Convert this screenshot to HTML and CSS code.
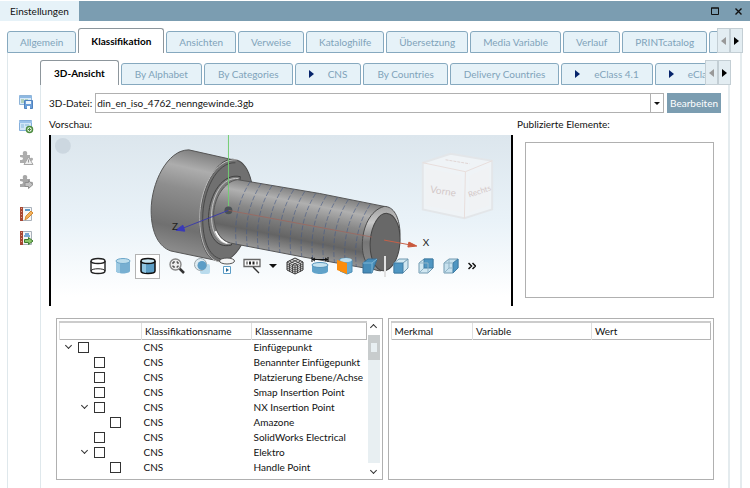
FILE: index.html
```html
<!DOCTYPE html>
<html lang="de">
<head>
  <meta charset="UTF-8">
  <meta name="viewport" content="width=device-width, initial-scale=1.0">
  <title>Einstellungen</title>
  <link rel="stylesheet" href="styles.css">
</head>
<body>

<header class="titlebar">
  <h1>Einstellungen</h1>
  <div class="window-buttons">
    <button type="button" aria-label="Maximieren"><svg width="8" height="8" viewBox="0 0 8 8"><path d="M.5 1h7v6.500h-7z M0 1h8" fill="none" stroke="#111"/></svg></button>
    <button type="button" aria-label="Schließen"><svg width="7" height="7" viewBox="0 0 7 7"><path d="M.5.5l6 6M6.500.5l-6 6" stroke="#111" stroke-width="1.400"/></svg></button>
  </div>
</header>

<div class="tabbar main-tabs">
  <nav class="tabs" aria-label="Bereiche">
    <button type="button" class="tab">Allgemein</button>
    <button type="button" class="tab active">Klassifikation</button>
    <button type="button" class="tab">Ansichten</button>
    <button type="button" class="tab">Verweise</button>
    <button type="button" class="tab">Kataloghilfe</button>
    <button type="button" class="tab">Übersetzung</button>
    <button type="button" class="tab">Media Variable</button>
    <button type="button" class="tab">Verlauf</button>
    <button type="button" class="tab">PRINTcatalog</button>
    <button type="button" class="tab" aria-label="Weitere"></button>
  </nav>
  <div class="tab-scroll">
    <button type="button" aria-label="Zurück" disabled><span class="tri left"></span></button>
    <button type="button" aria-label="Weiter"><span class="tri"></span></button>
  </div>
</div>

<main class="page">
  <aside class="sidebar">
    <button type="button" aria-label="Speichern">
      <svg width="16" height="16" viewBox="0 0 16 16"><path d="M1.500 1.500h12v9h-12z" fill="#d7e9f8" stroke="#8fb4d8"/><path d="M1 2h13v2H1z" fill="#8db8e2"/><path d="M3 6h3M3 8h3M7 6h3" stroke="#8cb884"/><path d="M6.500 6.500h8v8h-8z" fill="#6c9fd8" stroke="#4f82bf"/><path d="M8 7h5v3H8z" fill="#eef5fc"/><path d="M9 12h3v3H9z" fill="#fff"/></svg>
    </button>
    <button type="button" aria-label="Neu">
      <svg width="16" height="16" viewBox="0 0 16 16"><path d="M1.500 2.500h12v10h-12z" fill="#d3e7f8" stroke="#85aedb"/><path d="M1 3h13v2H1z" fill="#9cc3ea"/><path d="M3 7h3M3 9h3M7 7h4" stroke="#89b9da"/><circle cx="11.500" cy="11.500" r="3" fill="#e6f3e0" stroke="#4c8b3f" stroke-width="1.500"/><path d="M10 11.500h3M11.500 10v3" stroke="#4c8b3f"/></svg>
    </button>
    <button type="button" class="spaced" aria-label="Warnung" disabled>
      <svg width="16" height="16" viewBox="0 0 16 16"><path d="M2 5h3q-1-4 2-4t2 4h3v3q3-1 3 1t-3 2v2H2v-3q3 0 3-1.500T2 7z" fill="#adadad"/><path d="M10.500 7l4.500 7.500H6z" fill="#eee" stroke="#a5a5a5"/><path d="M10.500 9.500v3" stroke="#999"/></svg>
    </button>
    <button type="button" aria-label="Exportieren" disabled>
      <svg width="16" height="16" viewBox="0 0 16 16"><path d="M2 5h3q-1-4 2-4t2 4h3v3q3-1 3 1t-3 2v2H2v-3q3 0 3-1.500T2 7z" fill="#a7a7a7"/><path d="M7 8.500h3.500V6.500l4.500 4-4.500 4v-2H7z" fill="#c2c2c2" stroke="#8f8f8f"/></svg>
    </button>
    <button type="button" class="spaced" aria-label="Bearbeiten">
      <svg width="16" height="16" viewBox="0 0 16 16"><path d="M4.500 1.500h9v13h-9z" fill="#f7f7f7" stroke="#a9b1ba"/><path d="M2 1h3v14H2z" fill="#a64633"/><path d="M3.500 2v12" stroke="#e0a089" stroke-dasharray="1 2"/><path d="M7 4h5" stroke="#5f9bc8" stroke-width="2"/><path d="M7 14l1-4 5-5 2 2-5 5z" fill="#f4b25a" stroke="#d18a35"/></svg>
    </button>
    <button type="button" aria-label="Hinzufügen">
      <svg width="16" height="16" viewBox="0 0 16 16"><path d="M4.500 1.500h9v13h-9z" fill="#f7f7f7" stroke="#a9b1ba"/><path d="M2 1h3v14H2z" fill="#a64633"/><path d="M3.500 2v12" stroke="#e0a089" stroke-dasharray="1 2"/><path d="M6 6h6M7 4h4" stroke="#4e8fc6" stroke-width="1.500"/><path d="M6.500 9.500h4v-2l4.500 3.500-4.500 3.500v-2h-4z" fill="#8cc56b" stroke="#3d7c2f"/></svg>
    </button>
  </aside>

  <section class="content">
    <div class="tabbar sub-tabs">
      <nav class="tabs" aria-label="Klassifikationen">
        <button type="button" class="tab active">3D-Ansicht</button>
        <button type="button" class="tab">By Alphabet</button>
        <button type="button" class="tab">By Categories</button>
        <button type="button" class="tab"><span class="tri"></span>CNS</button>
        <button type="button" class="tab">By Countries</button>
        <button type="button" class="tab">Delivery Countries</button>
        <button type="button" class="tab"><span class="tri"></span>eClass 4.1</button>
        <button type="button" class="tab"><span class="tri"></span>eClass 5.0</button>
      </nav>
      <div class="tab-scroll">
        <button type="button" aria-label="Zurück" disabled><span class="tri left"></span></button>
        <button type="button" aria-label="Weiter"><span class="tri"></span></button>
      </div>
    </div>

    <div class="panel">
      <div class="file-row">
        <label for="datei">3D-Datei:</label>
        <div class="combo">
          <select id="datei">
            <option>din_en_iso_4762_nenngewinde.3gb</option>
          </select>
          <span class="combo-arrow"></span>
        </div>
        <button type="button" class="button">Bearbeiten</button>
      </div>

      <div class="top">
        <div class="preview">
          <h2>Vorschau:</h2>
          <div class="viewer">
            <svg class="scene" viewBox="49 135 464 172" role="img" aria-label="Schraube">
              <defs>
                <linearGradient id="sky" x1="0" y1="0" x2="0" y2="1">
                  <stop offset="0" stop-color="#dce6ed"/>
                  <stop offset=".5" stop-color="#e9f2f8"/>
                  <stop offset=".95" stop-color="#fff"/>
                </linearGradient>
                <linearGradient id="head" x1="0.400" y1="0" x2="0.200" y2="1">
                  <stop offset="0" stop-color="#808080"/>
                  <stop offset=".16" stop-color="#adadad"/>
                  <stop offset=".35" stop-color="#8e8e8e"/>
                  <stop offset=".7" stop-color="#707070"/>
                  <stop offset="1" stop-color="#989898"/>
                </linearGradient>
                <linearGradient id="shank" gradientUnits="userSpaceOnUse" x1="308" y1="191" x2="295" y2="257">
                  <stop offset="0" stop-color="#7c7c7c"/>
                  <stop offset=".2" stop-color="#b0b0b0"/>
                  <stop offset=".42" stop-color="#888"/>
                  <stop offset=".75" stop-color="#646464"/>
                  <stop offset="1" stop-color="#9a9a9a"/>
                </linearGradient>
                <linearGradient id="chamfer" x1="0" y1="0" x2="0" y2="1">
                  <stop offset="0" stop-color="#a0a0a0"/>
                  <stop offset=".25" stop-color="#c8c8c8"/>
                  <stop offset=".55" stop-color="#777"/>
                  <stop offset="1" stop-color="#8c8c8c"/>
                </linearGradient>
              </defs>
              <rect x="49" y="135" width="464" height="172" fill="url(#sky)"/>
              <circle cx="61" cy="146" r="8" fill="#ccd7e0"/>

              <!-- head -->
              <path d="M188 150C166 150 150 184 150 211C150 234 158 248 170 252L218 262L250 200L237 161Z" fill="url(#head)" stroke="#555" stroke-width="1"/>
              <ellipse cx="226" cy="211" rx="26" ry="52" transform="rotate(9 226 211)" fill="#707070" stroke="#4c4c4c"/>
              <path d="M237 160C214 158 199 190 199 219C199 241 206 261 219 263" fill="none" stroke="#bcbcbc" stroke-width="1"/>
              <path d="M235 163C216 162 202 192 202 219C202 241 208 257 220 260" fill="none" stroke="#484848"/>
              <!-- collar -->
              <path d="M240 177C222 173 209 195 208 216C207 235 215 250 231 246Z" fill="#7b7b7b" stroke="#404040"/>
              <path d="M238 179C222 177 212 196 211 214C210 233 218 247 231 244" fill="none" stroke="#c4c4c4" stroke-width="1"/>
              <path d="M215 232Q219 242 227 244" fill="none" stroke="#fff" stroke-width="2"/>

              <!-- shank -->
              <path d="M237 180L320 194L385 207C374 218 366 243 370 270L303 258L230 244C218 241 213 228 213 214C214 198 224 182 237 180Z" fill="url(#shank)" stroke="#555" stroke-width="1"/>
              <path d="M250 182Q232 210 236 246M261 184Q243 212 247 248M272 186Q254 214 258 250M283 188Q265 216 269 252M294 190Q276 218 280 254M305 192Q287 220 291 256M316 194Q298 222 302 258M327 196Q309 224 313 260M338 198Q320 226 324 262M349 200Q331 228 335 264M360 203Q342 231 346 266M371 205Q353 232 357 268" fill="none" stroke="#465985" stroke-width="1" stroke-dasharray="5 2" opacity=".6"/>
              <path d="M385 207C371 211 363 228 363 246C363 262 370 272 382 272L400 248L401 232C400 218 395 207 385 207Z" fill="url(#chamfer)" stroke="#4a4a4a"/>
              <ellipse cx="386" cy="243" rx="15" ry="29" transform="rotate(4 386 243)" fill="#686868" stroke="#444"/>

              <!-- axes -->
              <path d="M228 135V207" stroke="#72cc72" stroke-width="1"/>
              <circle cx="228" cy="211" r="4" fill="#4a5155"/>
              <path d="M228 211L182 229" stroke="#3d3da8" stroke-width="1"/>
              <path d="M175 231L182 226L184 232Z" fill="#3a3ab8" stroke="#3a3ab8"/>
              <path d="M228 211L373 238" stroke="#a3645a" stroke-width="1" opacity=".7"/>
              <path d="M385 241L412 246" stroke="#c66048" stroke-width="1"/>
              <path d="M418 247L410 243L409 248Z" fill="#c9583c" stroke="#c9583c"/>
              <text x="171" y="231" class="axis">Z</text>
              <text x="424" y="247" class="axis">X</text>

              <!-- view cube -->
              <path d="M424 163L452 154L494 161L494 210L466 219L424 210Z" fill="#eff3f6" stroke="#e3e6e9" stroke-width="2"/>
              <path d="M424 163L467 172L494 161M467 172L466 219" fill="none" stroke="#e8dedc" stroke-width="1"/>
              <path d="M427 168L463 176V213L427 206ZM471 176L491 167V206L471 213Z" fill="#f0f2f4"/>
              <path d="M447 160L471 164" stroke="#e0d5d3" stroke-width="1" stroke-dasharray="3 1"/>
              <text x="431" y="193" class="cube-text" transform="rotate(9 431 193)">Vorne</text>
              <text x="471" y="198" class="cube-text small" transform="rotate(-18 471 198)">Rechts</text>
            </svg>

            <div class="toolbar">
              <button type="button" aria-label="Drahtmodell"><svg width="18" height="18" viewBox="0 0 18 18"><path d="M2 4v10c0 3.300 14 3.300 14 0V4" fill="#fff" stroke="#222" stroke-width="1.400"/><ellipse cx="9" cy="4" rx="7" ry="2.500" fill="#fff" stroke="#222" stroke-width="1.400"/><path d="M2 14c0-3 14-3 14 0" fill="none" stroke="#222"/></svg></button>
              <button type="button" aria-label="Schattiert"><svg width="18" height="18" viewBox="0 0 18 18"><path d="M2 4v10c0 3.300 14 3.300 14 0V4" fill="#77afd1"/><path d="M2 4v10q1 2 4 2V4z" fill="#9cc9e2"/><ellipse cx="9" cy="4" rx="7" ry="2.500" fill="#bcddec" stroke="#6da7ca"/></svg></button>
              <button type="button" class="pressed" aria-label="Schattiert mit Kanten"><svg width="18" height="18" viewBox="0 0 18 18"><path d="M2 4v10c0 3.300 14 3.300 14 0V4" fill="#5c9ec6" stroke="#111" stroke-width="1.500"/><path d="M3 5v9q1 1.500 4 2V6z" fill="#91c6e2"/><ellipse cx="9" cy="4" rx="7" ry="2.500" fill="#c5e4f1" stroke="#111" stroke-width="1.500"/></svg></button>
              <button type="button" class="group" aria-label="Zoom"><svg width="18" height="18" viewBox="0 0 18 18"><path d="M11 11l5 5" stroke="#333" stroke-width="2.500"/><circle cx="7.500" cy="7.500" r="5.500" fill="#eee" stroke="#888" stroke-width="1.400"/><path d="M5 7V5h2M8.500 5h1.500v2M10 8.500V10H8.500M7 10H5V8.500" fill="none" stroke="#222"/></svg></button>
              <button type="button" aria-label="Transparenz"><svg width="18" height="18" viewBox="0 0 18 18"><rect x="7" y="7" width="10" height="10" rx="2" fill="#b9dbed"/><circle cx="7.500" cy="7.500" r="6" fill="#dfebf1" stroke="#9aa5aa"/><circle cx="9" cy="8.500" r="4.500" fill="#5c9dc6"/></svg></button>
              <button type="button" aria-label="Drehen"><svg width="18" height="18" viewBox="0 0 18 18"><ellipse cx="9" cy="4" rx="7.500" ry="3" fill="#f5f5f5" stroke="#555"/><path d="M5.500 9.500h7v7h-7z" fill="#fff" stroke="#5c9dc6"/><path d="M8 11l3 2-3 2z" fill="#246b9c"/></svg></button>
              <button type="button" aria-label="Beschriftung"><svg width="18" height="18" viewBox="0 0 18 18"><path d="M1 2.500h16v7H1z" fill="#fff" stroke="#666" stroke-width="1.300"/><path d="M3.500 6h1M6 6h2M9.500 6h2M13.500 6h1" stroke="#222" stroke-width="3"/><path d="M10 10l6 6" stroke="#333" stroke-width="1.300"/></svg></button>
              <button type="button" class="narrow" aria-label="Mehr Beschriftungen"><span class="tri down"></span></button>
              <button type="button" aria-label="Netz"><svg width="18" height="18" viewBox="0 0 18 18"><path d="M9 1l8 4v8l-8 4-8-4V5z" fill="#e5e5e5" stroke="#333"/><path d="M1 5l8 4 8-4M9 9v8M1 9l8 4 8-4M3.500 4l8 4v8M6 2.500l8.500 4v8M14.500 4l-8 4v8M12 2.500l-8.500 4v8M1 7l8 4 8-4M1 11l8 4 8-4" fill="none" stroke="#333" stroke-width=".8"/></svg></button>
              <button type="button" aria-label="Maße"><svg width="18" height="18" viewBox="0 0 18 18"><path d="M1 0v5M17 0v5M1 2.500h16M4 1L1.500 2.500 4 4M14 1l2.500 1.500L14 4" fill="none" stroke="#111"/><path d="M1 8v6c0 4 16 4 16 0V8" fill="#60a2c9"/><ellipse cx="9" cy="8" rx="8" ry="2.500" fill="#c7e3f0" stroke="#5594bb"/></svg></button>
              <button type="button" aria-label="Schnitt"><svg width="18" height="18" viewBox="0 0 18 18"><path d="M4 2l7-1 5 2v12l-5 2-7-3z" fill="#68a8cd" stroke="#4c8fb8"/><ellipse cx="10" cy="3" rx="6" ry="2" fill="#bdddec"/><path d="M1 3l10 3v11L1 13z" fill="#fc8c0b"/></svg></button>
              <button type="button" aria-label="Ansicht hinten"><svg width="18" height="18" viewBox="0 0 18 18"><path d="M2 6l5-4h9l-5 14H2z" fill="#468cb8" stroke="#366f97"/><path d="M2 6h9l5-4M11 6v10" fill="none" stroke="#7eb5d4"/></svg></button>
              <span class="divider"></span>
              <button type="button" aria-label="Ansicht vorne"><svg width="18" height="18" viewBox="0 0 18 18"><path d="M2 6l5-4h9v9l-5 5H2z" fill="#d2e8f2" stroke="#7199b0"/><path d="M2 6h9v10H2z" fill="#4f96c2" stroke="#3f7da5"/><path d="M11 6l5-4" stroke="#7199b0"/></svg></button>
              <button type="button" aria-label="Ansicht oben"><svg width="18" height="18" viewBox="0 0 18 18"><path d="M2 6l5-4h9v9l-5 5H2z" fill="#d2e8f2" stroke="#7199b0"/><path d="M7 2h9v9H7z" fill="#4f96c2" stroke="#3f7da5"/><path d="M2 6h9v10M2 16l5-5" fill="none" stroke="#91b4c7"/></svg></button>
              <button type="button" aria-label="Ansicht rechts"><svg width="18" height="18" viewBox="0 0 18 18"><path d="M2 6l5-4h9v9l-5 5H2z" fill="#c7e1ee" stroke="#7199b0"/><path d="M11 6l5-4v9l-5 5z" fill="#4f96c2" stroke="#3f7da5"/><path d="M2 6h9M7 2v9l-5 5M7 11h4" fill="none" stroke="#91b4c7"/></svg></button>
              <button type="button" class="narrow" aria-label="Mehr"><svg width="8" height="8" viewBox="0 0 8 8"><path d="M.5 1l3 3-3 3M4.500 1l3 3-3 3" fill="none" stroke="#111" stroke-width="1.500"/></svg></button>
            </div>
          </div>
        </div>

        <div class="published">
          <h2>Publizierte Elemente:</h2>
          <div class="list"></div>
        </div>
      </div>

      <div class="bottom">
        <div class="box">
          <div class="rows">
            <table class="tree">
              <thead>
                <tr><th class="col-tree"></th><th class="col-name">Klassifikationsname</th><th>Klassenname</th></tr>
              </thead>
              <tbody>
                <tr><td><div class="node"><span class="chevron"></span><input type="checkbox" aria-label="Einfügepunkt"></div></td><td>CNS</td><td>Einfügepunkt</td></tr>
                <tr><td><div class="node level-1"><span class="leaf"></span><input type="checkbox" aria-label="Benannter Einfügepunkt"></div></td><td>CNS</td><td>Benannter Einfügepunkt</td></tr>
                <tr><td><div class="node level-1"><span class="leaf"></span><input type="checkbox" aria-label="Platzierung Ebene/Achse"></div></td><td>CNS</td><td>Platzierung Ebene/Achse</td></tr>
                <tr><td><div class="node level-1"><span class="leaf"></span><input type="checkbox" aria-label="Smap Insertion Point"></div></td><td>CNS</td><td>Smap Insertion Point</td></tr>
                <tr><td><div class="node level-1"><span class="chevron"></span><input type="checkbox" aria-label="NX Insertion Point"></div></td><td>CNS</td><td>NX Insertion Point</td></tr>
                <tr><td><div class="node level-2"><span class="leaf"></span><input type="checkbox" aria-label="Amazone"></div></td><td>CNS</td><td>Amazone</td></tr>
                <tr><td><div class="node level-1"><span class="leaf"></span><input type="checkbox" aria-label="SolidWorks Electrical"></div></td><td>CNS</td><td>SolidWorks Electrical</td></tr>
                <tr><td><div class="node level-1"><span class="chevron"></span><input type="checkbox" aria-label="Elektro"></div></td><td>CNS</td><td>Elektro</td></tr>
                <tr><td><div class="node level-2"><span class="leaf"></span><input type="checkbox" aria-label="Handle Point"></div></td><td>CNS</td><td>Handle Point</td></tr>
                <tr><td><div class="node level-2"><span class="leaf"></span><input type="checkbox" aria-label="Weiterer Punkt"></div></td><td></td><td></td></tr>
              </tbody>
            </table>
          </div>
          <div class="scrollbar">
            <button type="button" aria-label="Nach oben"><span class="chevron up"></span></button>
            <div class="thumb"></div>
            <button type="button" aria-label="Nach unten"><span class="chevron"></span></button>
          </div>
        </div>
        <div class="box">
          <div class="rows">
            <table class="values">
              <thead>
                <tr><th>Merkmal</th><th class="col-variable">Variable</th><th class="col-value">Wert</th></tr>
              </thead>
            </table>
          </div>
        </div>
      </div>
    </div>
  </section>
</main>

</body>
</html>
```
FILE: styles.css
```css
* {
  box-sizing: border-box;
  margin: 0;
  padding: 0;
}
body {
  display: flex;
  flex-direction: column;
  height: 100vh;
  overflow: hidden;
  font-family: Lato, "Noto Sans", sans-serif;
  font-size: 10px;
  line-height: 14px;
  background: #fff;
  color: #111;
}
button, input, select {
  font: inherit;
  color: inherit;
}
button {
  display: flex;
  align-items: center;
  justify-content: center;
  border: none;
  background: none;
}
svg {
  display: block;
}
h1, h2 {
  font-size: inherit;
  font-weight: normal;
}

/* title bar */
.titlebar {
  display: flex;
  justify-content: space-between;
  height: 20px;
  margin-top: 1px;
  background: #7b9db1;
}
.titlebar h1 {
  padding: 3px 10px;
  background: #e6f2f8;
}
.window-buttons {
  display: flex;
  gap: 16px;
  padding-right: 8px;
}

/* tabs */
.tabbar {
  display: flex;
}
.main-tabs {
  padding: 7px 7px 0 7px;
}
.sub-tabs {
  padding-right: 9px;
}
.tabs {
  display: flex;
  flex: 1;
  align-items: flex-end;
  gap: 2px;
  min-width: 0;
  overflow: hidden;
}
.tab {
  flex: none;
  height: 22px;
  padding: 0 13px;
  border: 1px solid #86a9bf;
  border-radius: 3px 3px 0 0;
  background: #e6f2f8;
  color: #7fa3ba;
}
.main-tabs .tab {
  padding: 0 12px;
}
.tab.active {
  height: 25px;
  border-color: #8d969c;
  border-bottom: none;
  background: #fff;
  color: #000;
  font-weight: bold;
}
.tab .tri {
  margin-right: 14px;
  border-left-color: #06246b;
}
.tab-scroll {
  display: flex;
  height: 25px;
}
.tab-scroll button {
  width: 13px;
  border: 1px solid #c3ced4;
  background: #e3edf2;
}
.tri {
  border-left: 5px solid #000;
  border-top: 4px solid transparent;
  border-bottom: 4px solid transparent;
}
.tri.left {
  border-left: none;
  border-right: 5px solid #999;
}
.tri.down {
  border-top: 4px solid #111;
  border-left: 4px solid transparent;
  border-right: 4px solid transparent;
  border-bottom: none;
}

/* page */
.page {
  display: flex;
  flex: 1;
  min-height: 0;
  margin: 0 8px 0 7px;
  padding-top: 7px;
  border-left: 1px solid #dfe8ec;
  border-right: 2px solid #e4ebee;
}
.sidebar {
  display: flex;
  flex-direction: column;
  gap: 8px;
  width: 32px;
  padding: 34px 0 0 10px;
}
.sidebar button {
  width: 16px;
}
.sidebar .spaced {
  margin-top: 8px;
}
.content {
  display: flex;
  flex: 1;
  flex-direction: column;
  min-width: 0;
}
.panel {
  display: flex;
  flex: 1;
  flex-direction: column;
  min-height: 0;
  margin-right: 10px;
  padding: 8px 7px 8px 8px;
  border-left: 1px solid #dfe8ec;
  border-right: 2px solid #e4ebee;
}
.file-row {
  display: flex;
  align-items: center;
  gap: 3px;
}
.combo {
  position: relative;
  flex: 1;
}
.combo select {
  display: block;
  width: 100%;
  height: 20px;
  padding: 0 1px;
  border: 1px solid #b0b0b0;
  border-radius: 0;
  background: #fff;
  appearance: none;
}
.combo-arrow {
  position: absolute;
  top: 1px;
  right: 1px;
  bottom: 1px;
  width: 13px;
  border-left: 1px solid #b0b0b0;
  pointer-events: none;
}
.combo-arrow::after {
  content: "";
  position: absolute;
  top: 8px;
  left: 3px;
  border-top: 3px solid #111;
  border-left: 3px solid transparent;
  border-right: 3px solid transparent;
}
.button {
  height: 20px;
  padding: 0 3px;
  background: #7b9db1;
  color: #fff;
}

/* preview */
.top {
  display: flex;
  gap: 4px;
  padding-top: 4px;
}
.preview {
  flex: 1;
}
.preview h2 {
  padding-bottom: 4px;
}
.viewer {
  position: relative;
  border-left: 2px solid #000;
  border-right: 2px solid #000;
}
.scene {
  width: 100%;
}
.axis {
  font-size: 10px;
  fill: #222;
}
.cube-text {
  font-size: 10px;
  fill: #d3c8c8;
}
.cube-text.small {
  font-size: 8px;
}
.toolbar {
  position: absolute;
  left: 34px;
  bottom: 27px;
  display: flex;
  align-items: center;
}
.toolbar button {
  width: 25px;
  height: 25px;
}
.toolbar .pressed {
  border: 1px solid #b3b3b3;
  background: #fff;
}
.toolbar .group {
  margin-left: 4px;
}
.toolbar .narrow {
  width: 18px;
}
.divider {
  width: 2px;
  height: 21px;
  margin: 0 2px;
  background: #e0e0e0;
}
.published {
  display: flex;
  flex-direction: column;
  width: 204px;
}
.list {
  flex: 1;
  margin: 11px 7px 8px 8px;
  border: 1px solid #b0b0b0;
}

/* tables */
.bottom {
  display: flex;
  flex: 1;
  gap: 5px;
  min-height: 0;
  margin: 12px 7px 0 7px;
}
.box {
  display: flex;
  flex: 1;
  min-width: 0;
  padding: 2px;
  border: 1px solid #b0b0b0;
}
.rows {
  flex: 1;
  overflow: hidden;
}
table {
  width: 100%;
  table-layout: fixed;
  border-collapse: collapse;
}
thead {
  border: 1px solid #b5b5b5;
  border-top: 2px solid #ccc;
}
th {
  height: 18px;
  padding-left: 3px;
  border-left: 1px solid #e0e0e0;
  font-weight: normal;
  text-align: left;
}
td {
  height: 15px;
  padding-left: 2px;
  white-space: nowrap;
}
.col-tree {
  width: 82px;
}
.col-name {
  width: 110px;
}
.col-variable {
  width: 119px;
}
.col-value {
  width: 119px;
}
.node {
  display: flex;
  align-items: center;
}
.level-1 {
  padding-left: 16px;
}
.level-2 {
  padding-left: 32px;
}
.leaf {
  width: 17px;
}
.chevron {
  width: 5px;
  height: 5px;
  margin: 0 7px 3px 4px;
  border: solid #333;
  border-width: 0 1px 1px 0;
  transform: rotate(45deg);
}
.leaf {
  width: 16px;
}
.node input {
  width: 11px;
  height: 11px;
  border: 1px solid #333;
  background: #fff;
  appearance: none;
}
.scrollbar {
  display: flex;
  flex-direction: column;
  align-items: center;
  width: 12px;
  margin-left: 1px;
  background: #e8eff2;
}
.scrollbar button {
  width: 12px;
  height: 14px;
  background: #fff;
}
.scrollbar button:last-child {
  margin-top: auto;
}
.scrollbar .chevron {
  margin: 0;
}
.scrollbar .up {
  transform: rotate(225deg);
}
.thumb {
  width: 12px;
  height: 25px;
  border: 8px solid #c8cccd;
  border-width: 8px 3px;
  background: #e8eff2;
}
```
